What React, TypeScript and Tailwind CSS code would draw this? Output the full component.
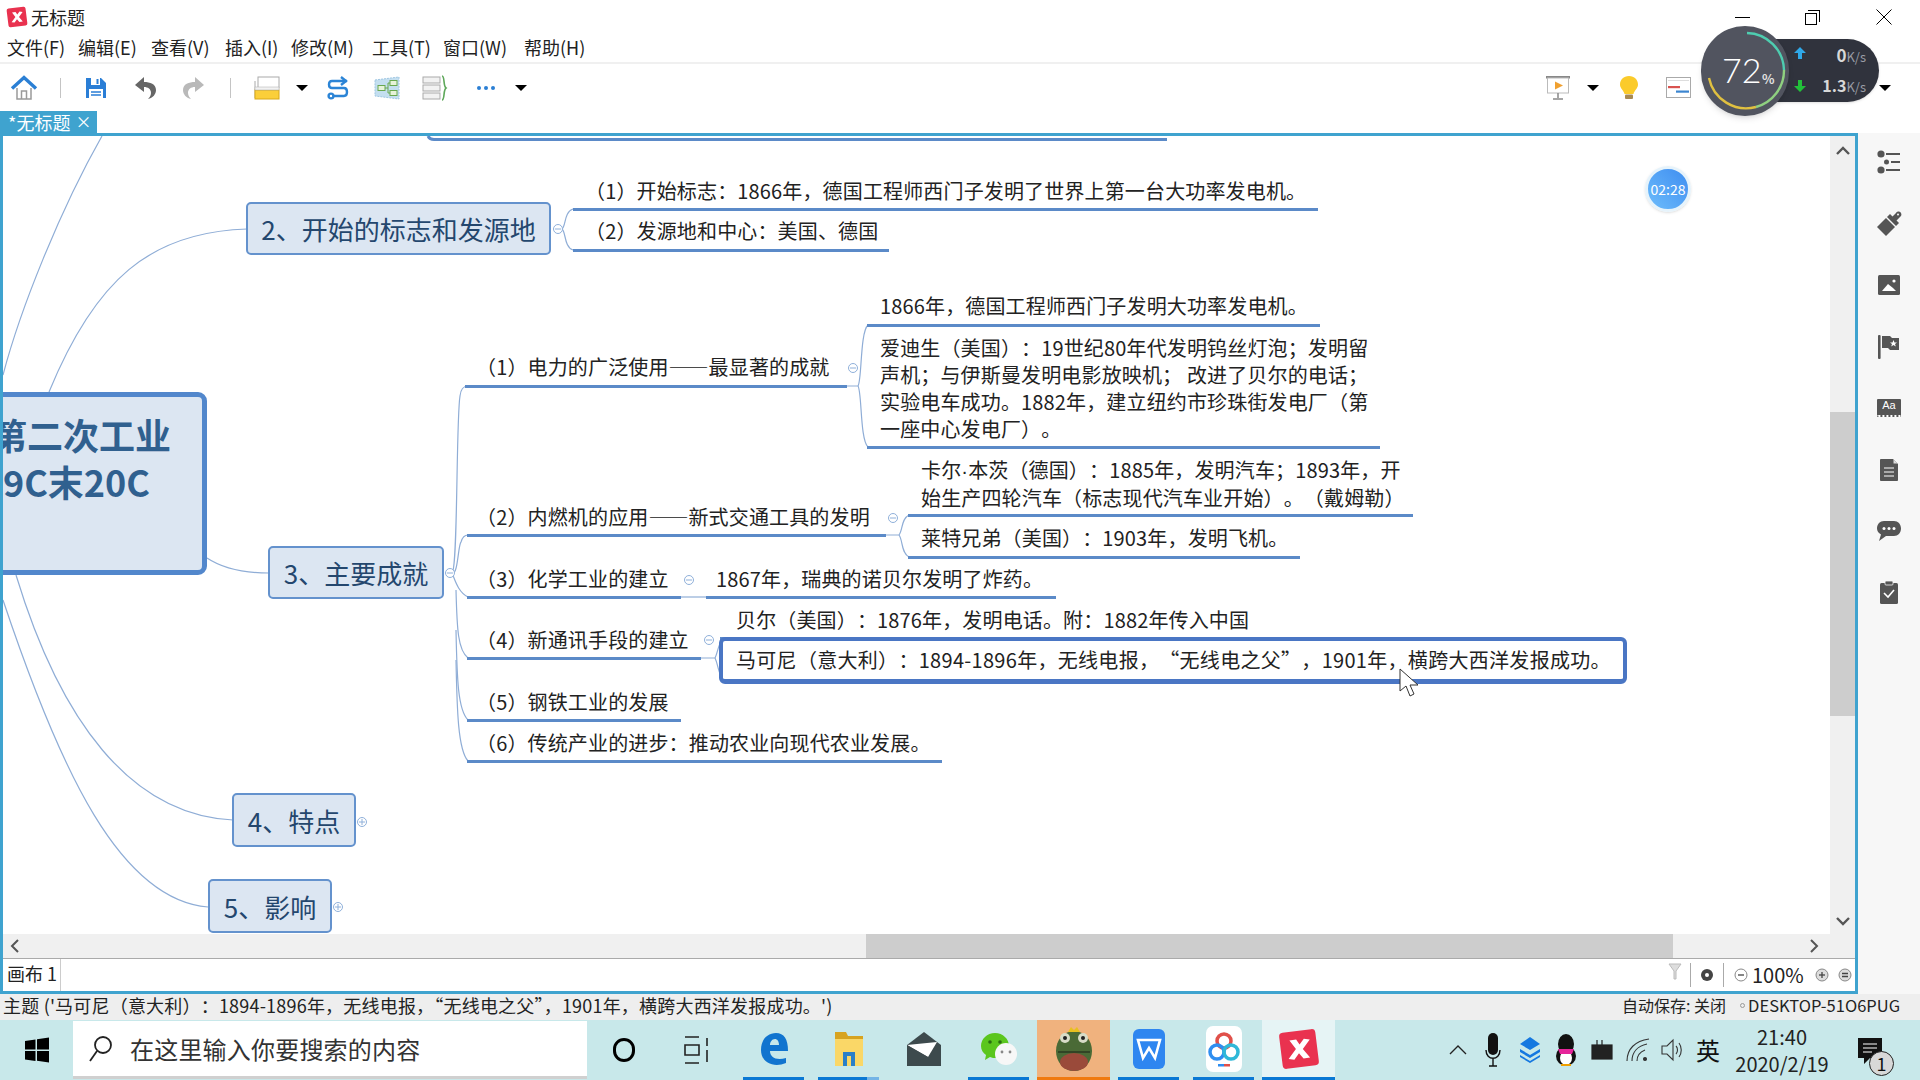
import type { ReactNode } from "react";

const menus = [
  { label: "文件(F)", cls: "w-[71px]" },
  { label: "编辑(E)", cls: "w-[73px]" },
  { label: "查看(V)", cls: "w-[74px]" },
  { label: "插入(I)", cls: "w-[66px]" },
  { label: "修改(M)", cls: "w-[81px]" },
  { label: "工具(T)", cls: "w-[71px]" },
  { label: "窗口(W)", cls: "w-[81px]" },
  { label: "帮助(H)", cls: "w-[80px]" },
];

function Caret({ className = "" }: { className?: string }) {
  return <div className={"w-0 h-0 border-x-[6px] border-x-transparent border-t-[6px] border-t-black " + className} />;
}

function Cell({ className, children }: { className: string; children?: ReactNode }) {
  return <div className={"flex items-center justify-center shrink-0 h-full " + className}>{children}</div>;
}

function XmindLogo({ size }: { size: number }) {
  return (
    <svg width={size} height={size} viewBox="0 0 24 24">
      <rect x="2.5" y="2.5" width="19" height="19" rx="2" fill="#e9324f" transform="rotate(-7 12 12)" />
      <path d="M7 7.5 L10.5 7 L12.3 9.6 L14.5 6.6 L17.6 7 L14 12 L17.8 16.4 L14.4 17 L12 14.2 L9.6 17.6 L6.6 17.2 L10.4 12 Z" fill="#fff" />
    </svg>
  );
}

function TitleBar() {
  return (
    <div className="h-[34px] flex items-center shrink-0 relative">
      <div className="ml-[3px] w-[27px] flex justify-center"><XmindLogo size={24} /></div>
      <span className="ml-[1px] text-[18px] text-[#222]">无标题</span>
      <div className="ml-auto flex items-center h-full">
        <div className="w-[15px] h-px bg-black mr-[55px]" />
        <div className="relative w-[15px] h-[15px] mr-[56px]">
          <div className="absolute left-0 bottom-0 w-[12px] h-[12px] border border-black bg-white" />
          <div className="absolute right-0 top-0 w-[12px] h-[12px] border-t border-r border-black" />
        </div>
        <svg width="16" height="16" viewBox="0 0 16 16" className="mr-[28px]"><path d="M0.5 0.5 L15.5 15.5 M15.5 0.5 L0.5 15.5" stroke="#000" strokeWidth="1" /></svg>
      </div>
    </div>
  );
}

function MenuBar() {
  return (
    <div className="h-[30px] flex items-center pl-[7px] pb-[2px] border-b-2 border-[#f0f0f0] shrink-0 text-[18px] text-[#222]">
      {menus.map((m) => (
        <div key={m.label} className={"whitespace-nowrap " + m.cls}>{m.label}</div>
      ))}
    </div>
  );
}

function Toolbar() {
  return (
    <div className="h-[47px] flex items-center shrink-0">
      <Cell className="w-[48px]">
        <svg width="28" height="28" viewBox="0 0 28 28">
          <path d="M7 14 V25 H21 V14" fill="#fff" stroke="#9a9a9a" strokeWidth="1.5" />
          <path d="M11.5 25 V17 H16.5 V25" fill="none" stroke="#9a9a9a" strokeWidth="1.5" />
          <path d="M2 14.5 L14 3.5 L26 14.5" fill="none" stroke="#2b7fd4" strokeWidth="3.4" />
        </svg>
      </Cell>
      <Cell className="w-[24px]"><div className="w-px h-[20px] bg-[#c4c4c4]" /></Cell>
      <Cell className="w-[48px]">
        <svg width="24" height="24" viewBox="0 0 24 24">
          <path d="M2 2 H17 L22 7 V22 H2 Z" fill="#2a7ed6" />
          <rect x="7" y="2" width="9" height="7" fill="#fff" />
          <rect x="12.5" y="3" width="2" height="5" fill="#2a7ed6" />
          <rect x="5" y="13" width="14" height="9" fill="#fff" />
          <path d="M7 16 H17 M7 19 H17" stroke="#2a7ed6" strokeWidth="1.3" />
        </svg>
      </Cell>
      <Cell className="w-[50px]">
        <svg width="24" height="26" viewBox="0 0 24 26"><path d="M11 2 L2 10 L11 17 V12 C15 12 18 14 18 18 C18 21 16 23 15 24 C20 23 23 19 23 15 C23 9 17 7 11 7 Z" fill="#666" /></svg>
      </Cell>
      <Cell className="w-[48px]">
        <svg width="24" height="26" viewBox="0 0 24 26"><path d="M13 2 L22 10 L13 17 V12 C9 12 6 14 6 18 C6 21 8 23 9 24 C4 23 1 19 1 15 C1 9 7 7 13 7 Z" fill="#b9b9b9" /></svg>
      </Cell>
      <Cell className="w-[24px]"><div className="w-px h-[20px] bg-[#c4c4c4]" /></Cell>
      <Cell className="w-[50px]">
        <svg width="26" height="24" viewBox="0 0 26 24">
          <rect x="4" y="1" width="21" height="11" fill="#fff" stroke="#aaa" />
          <path d="M1 5 V22 H4" fill="none" stroke="#aaa" />
          <rect x="1" y="14" width="24" height="9" fill="#fbcf3a" stroke="#d9a91a" />
          <rect x="1" y="11" width="24" height="3" fill="#f2f2f2" stroke="#aaa" strokeWidth="0.5" />
        </svg>
      </Cell>
      <Cell className="w-[20px]"><Caret /></Cell>
      <Cell className="w-[52px]">
        <svg width="24" height="24" viewBox="0 0 24 24" fill="none" stroke="#2b84d6" strokeWidth="2.4">
          <path d="M21 5 H6 C2 5 2 12 6 12 H18 C22 12 22 20 18 20 H8" />
          <path d="M15 1 L20 5 L15 9" />
          <circle cx="5" cy="20" r="2.4" />
        </svg>
      </Cell>
      <Cell className="w-[46px]">
        <svg width="26" height="24" viewBox="0 0 26 24">
          <path d="M1 4 L25 1 V23 L1 20 Z" fill="#c4dff0" stroke="#9ec6e2" strokeDasharray="2 1" />
          <rect x="4" y="9.5" width="7" height="5" fill="#e6f3d9" stroke="#68a84f" />
          <rect x="16" y="4.5" width="7" height="5" fill="#e6f3d9" stroke="#68a84f" />
          <rect x="16" y="14.5" width="7" height="5" fill="#e6f3d9" stroke="#68a84f" />
          <path d="M11 12 H14 V7 H16 M14 12 V17 H16" fill="none" stroke="#68a84f" />
        </svg>
      </Cell>
      <Cell className="w-[50px]">
        <svg width="26" height="26" viewBox="0 0 26 26">
          <rect x="1" y="2" width="17" height="6" fill="#f2f2f2" stroke="#aaa" />
          <rect x="1" y="10" width="17" height="6" fill="#f2f2f2" stroke="#aaa" />
          <rect x="1" y="18" width="17" height="6" fill="#f2f2f2" stroke="#aaa" />
          <path d="M20 1 C23 1 21 11 24 13 C21 15 23 25 20 25" fill="none" stroke="#5ea85a" strokeWidth="1.6" />
        </svg>
      </Cell>
      <Cell className="w-[52px]">
        <div className="flex gap-[3px]">
          <div className="w-[4px] h-[4px] rounded-full bg-[#2b7fd4]" />
          <div className="w-[4px] h-[4px] rounded-full bg-[#2b7fd4]" />
          <div className="w-[4px] h-[4px] rounded-full bg-[#2b7fd4]" />
        </div>
      </Cell>
      <Cell className="w-[18px]"><Caret /></Cell>

      <Cell className="w-[40px] ml-[1008px]">
        <svg width="26" height="26" viewBox="0 0 26 26">
          <rect x="1" y="1" width="24" height="2.5" fill="#888" />
          <rect x="2.5" y="3" width="21" height="15" fill="#fff" stroke="#bbb" />
          <path d="M10 6.5 L18 10.5 L10 14.5 Z" fill="#f0a030" />
          <path d="M13 18 V23 M8 24 H18" stroke="#888" strokeWidth="1.5" />
        </svg>
      </Cell>
      <Cell className="w-[30px]"><Caret /></Cell>
      <Cell className="w-[42px]">
        <svg width="20" height="26" viewBox="0 0 20 26">
          <path d="M10 1 C4.5 1 1 5 1 9.5 C1 13.5 4.5 15 5.5 19 H14.5 C15.5 15 19 13.5 19 9.5 C19 5 15.5 1 10 1 Z" fill="#fbcb2b" />
          <rect x="6" y="19.5" width="8" height="4.5" rx="1" fill="#a98a52" />
        </svg>
      </Cell>
      <Cell className="w-[56px]">
        <svg width="25" height="21" viewBox="0 0 25 21">
          <rect x="0.5" y="0.5" width="24" height="20" fill="#fff" stroke="#aaa" />
          <path d="M2 3.5 H23" stroke="#ddd" />
          <rect x="2" y="9" width="12" height="2.2" fill="#d9534f" />
          <rect x="10" y="13.5" width="13" height="2.2" fill="#3b85d0" />
        </svg>
      </Cell>
      <Cell className="w-[20px] ml-auto mr-[25px]"><Caret /></Cell>
    </div>
  );
}

function Sub({ className, children }: { className: string; children: ReactNode }) {
  return (
    <div className={"absolute border-b-[3px] border-[#5b8ac8] text-[20px] tracking-[0.15px] leading-[27px] text-[#222] whitespace-nowrap " + className}>
      {children}
    </div>
  );
}

function Dash() {
  return <span className="[font-feature-settings:'fwid'] tracking-normal">——</span>;
}

function Branch({ className, children }: { className: string; children: ReactNode }) {
  return (
    <div className={"absolute flex items-center justify-center bg-[#dce6f2] border-2 border-[#6492cd] rounded-[5px] text-[26px] text-[#24476e] whitespace-nowrap " + className}>
      {children}
    </div>
  );
}

function Fold({ x, y, plus = false }: { x: number; y: number; plus?: boolean }) {
  return (
    <g fill="#fff" stroke="#8fb0da" strokeWidth="1">
      <circle cx={x} cy={y} r="4.5" />
      <path d={`M${x - 3} ${y} H${x + 3}`} />
      {plus && <path d={`M${x} ${y - 3} V${y + 3}`} />}
    </g>
  );
}

function Connectors() {
  return (
    <svg className="absolute inset-0 w-[1827px] h-[798px]" viewBox="3 136 1827 798">
      <g fill="none" stroke="#8fadd6" strokeWidth="1.2">
        <path d="M102 136 C60 210 20 310 3 375" />
        <path d="M247 229 C150 232 95 280 49 392" />
        <path d="M207 558 C222 568 240 573 269 573" />
        <path d="M16 575 C60 720 130 815 233 820" />
        <path d="M3 600 C60 770 120 900 208 907" />
        <path d="M445 573 H452 C458 570 456 420 460 396 Q461 386 468 386" />
        <path d="M452 573 C458 576 458 545 461 542 Q463 535 468 535" />
        <path d="M452 573 C455 580 458 592 468 597" />
        <path d="M456 590 C457 630 458 650 468 658" />
        <path d="M456 630 C457 680 458 710 468 720" />
        <path d="M456 660 C457 710 458 750 468 761" />
        <path d="M553 229 H562 C566 226 564 212 573 209" />
        <path d="M562 229 C566 232 564 247 573 250" />
        <path d="M847 386 H858 C862 380 860 332 868 325" />
        <path d="M858 386 C862 392 860 440 868 447" />
        <path d="M886 535 H899 C903 530 901 519 909 515" />
        <path d="M899 535 C903 540 901 553 909 557" />
        <path d="M681 597 H706" />
        <path d="M701 658 H715 C718 652 718 645 722 640" />
        <path d="M715 658 C718 664 718 672 722 678" />
      </g>
      <path d="M428 136 C429 138 431 139.5 434 139.5 H1167" fill="none" stroke="#5b8ac8" strokeWidth="3" />
      <Fold x={558} y={229} />
      <Fold x={450} y={573} />
      <Fold x={853} y={368} />
      <Fold x={893} y={518} />
      <Fold x={689} y={580} />
      <Fold x={709} y={640} />
      <Fold x={362} y={822} plus />
      <Fold x={338} y={907} plus />
    </svg>
  );
}

function Canvas() {
  return (
    <div className="relative w-[1827px] h-[798px] overflow-hidden bg-white shrink-0">
      <Connectors />
      <div className="absolute left-[-20px] top-[256px] w-[224px] h-[183px] bg-[#dce6f2] border-[5px] border-[#5287cc] rounded-[9px] pl-[3px] pt-[14px] text-[36px] leading-[47px] font-bold text-[#30608f] whitespace-nowrap">
        <div>第二次工业</div>
        <div className="pl-[12px]">9C末20C</div>
      </div>

      <Branch className="left-[243px] top-[66px] w-[305px] h-[53px]">2、开始的标志和发源地</Branch>
      <Branch className="left-[265px] top-[410px] w-[176px] h-[53px]">3、主要成就</Branch>
      <Branch className="left-[229px] top-[657px] w-[124px] h-[54px]">4、特点</Branch>
      <Branch className="left-[205px] top-[743px] w-[124px] h-[54px]">5、影响</Branch>

      <Sub className="left-[570px] top-[41px] w-[745px] h-[34px] pl-[12px]">（1）开始标志：1866年，德国工程师西门子发明了世界上第一台大功率发电机。</Sub>
      <Sub className="left-[570px] top-[81px] w-[316px] h-[35px] pl-[12px]">（2）发源地和中心：美国、德国</Sub>

      <Sub className="left-[462px] top-[217px] w-[382px] h-[35px] pl-[11px]">（1）电力的广泛使用<Dash />最显著的成就</Sub>
      <Sub className="left-[864px] top-[156px] w-[453px] h-[35px] pl-[13px]">1866年，德国工程师西门子发明大功率发电机。</Sub>
      <Sub className="left-[864px] top-[198px] w-[513px] h-[115px] pl-[13px]">
        <div>爱迪生（美国）：19世纪80年代发明钨丝灯泡；发明留</div>
        <div>声机；与伊斯曼发明电影放映机； 改进了贝尔的电话；</div>
        <div>实验电车成功。1882年，建立纽约市珍珠街发电厂（第</div>
        <div>一座中心发电厂）。</div>
      </Sub>

      <Sub className="left-[464px] top-[367px] w-[419px] h-[34px] pl-[9px]">（2）内燃机的应用<Dash />新式交通工具的发明</Sub>
      <Sub className="left-[905px] top-[320px] w-[505px] h-[61px] pl-[13px]">
        <div>卡尔<span className="font-['Liberation_Sans',sans-serif]">·</span>本茨（德国）：1885年，发明汽车；1893年，开</div>
        <div className="-mt-[1px]">始生产四轮汽车（标志现代汽车业开始）。（戴姆勒）</div>
      </Sub>
      <Sub className="left-[905px] top-[388px] w-[392px] h-[35px] pl-[13px]">莱特兄弟（美国）：1903年，发明飞机。</Sub>

      <Sub className="left-[464px] top-[429px] w-[214px] h-[34px] pl-[9px]">（3）化学工业的建立</Sub>
      <Sub className="left-[703px] top-[429px] w-[350px] h-[34px] pl-[10px]">1867年，瑞典的诺贝尔发明了炸药。</Sub>

      <Sub className="left-[464px] top-[490px] w-[234px] h-[34px] pl-[9px]">（4）新通讯手段的建立</Sub>
      <Sub className="left-[717px] top-[470px] w-[543px] h-[34px] pl-[16px] border-[#2f5cb0]">贝尔（美国）：1876年，发明电话。附：1882年传入中国</Sub>
      <div className="absolute left-[716px] top-[501px] w-[908px] h-[47px] flex items-center pl-[13px] border-[4px] border-b-[5px] border-[#4a76c4] rounded-[6px] text-[20px] tracking-[0.3px] text-[#222] whitespace-nowrap">
        马可尼（意大利）：1894-1896年，无线电报，“无线电之父”，1901年，横跨大西洋发报成功。
      </div>

      <Sub className="left-[464px] top-[552px] w-[214px] h-[34px] pl-[9px]">（5）钢铁工业的发展</Sub>
      <Sub className="left-[464px] top-[593px] w-[475px] h-[34px] pl-[9px]">（6）传统产业的进步：推动农业向现代农业发展。</Sub>

      <div className="absolute left-[1642px] top-[30px] w-[46px] h-[46px] rounded-full border-[3px] border-[#e6f3fb] bg-gradient-to-tr from-[#6dbcfb] to-[#3f8df0] flex items-center justify-center text-[14px] text-white shadow-sm">
        02:28
      </div>

      <svg className="absolute left-[1396px] top-[532px]" width="22" height="30" viewBox="0 0 22 30">
        <path d="M1 1 L1 23 L7 18 L11 28 L15 26 L11 17 L19 17 Z" fill="#fff" stroke="#333" strokeWidth="1" />
      </svg>
    </div>
  );
}

function VScroll() {
  return (
    <div className="w-[25px] flex flex-col bg-[#f0f0f0] shrink-0 relative">
      <div className="h-[276px] flex justify-center pt-[10px]">
        <svg width="14" height="10" viewBox="0 0 14 10"><path d="M1 8 L7 2 L13 8" fill="none" stroke="#555" strokeWidth="2.4" /></svg>
      </div>
      <div className="h-[304px] bg-[#cdcdcd]" />
      <div className="flex-1 flex items-end justify-center pb-[8px]">
        <svg width="14" height="10" viewBox="0 0 14 10"><path d="M1 2 L7 8 L13 2" fill="none" stroke="#555" strokeWidth="2.4" /></svg>
      </div>
    </div>
  );
}

function HScroll() {
  return (
    <div className="h-[25px] flex bg-[#f0f0f0] border-b border-[#aaaaaa] shrink-0">
      <div className="w-[863px] flex items-center pl-[7px]">
        <svg width="10" height="14" viewBox="0 0 10 14"><path d="M8 1 L2 7 L8 13" fill="none" stroke="#555" strokeWidth="2" /></svg>
      </div>
      <div className="w-[807px] bg-[#cdcdcd]" />
      <div className="flex-1 flex items-center pl-[136px]">
        <svg width="10" height="14" viewBox="0 0 10 14"><path d="M2 1 L8 7 L2 13" fill="none" stroke="#555" strokeWidth="2" /></svg>
      </div>
    </div>
  );
}

function ZoomBtn({ plus = false, eq = false }: { plus?: boolean; eq?: boolean }) {
  return (
    <svg width="14" height="14" viewBox="0 0 14 14">
      <circle cx="7" cy="7" r="6" fill={plus || eq ? "#ddd" : "#fff"} stroke="#888" />
      <path d={eq ? "M4 5.5 H10 M4 8.5 H10" : "M4 7 H10"} stroke="#444" strokeWidth="1.3" />
      {plus && <path d="M7 4 V10" stroke="#444" strokeWidth="1.3" />}
    </svg>
  );
}

function SheetBar() {
  return (
    <div className="flex-1 flex items-stretch bg-white">
      <div className="w-[58px] border-r border-[#cccccc] text-[18px] text-[#222] pl-[4px] pb-[3px] flex items-center">画布 1</div>
      <div className="ml-auto flex items-center">
        <svg width="14" height="18" viewBox="0 0 14 18" className="mr-[8px] mb-[6px]"><path d="M1 1 H13 L8 8 V16 L6 16 V8 Z" fill="#ddd" stroke="#bbb" /></svg>
        <div className="w-px h-[24px] bg-[#aaa]" />
        <svg width="32" height="14" viewBox="0 0 32 14"><circle cx="16" cy="7" r="6" fill="#444" /><circle cx="16" cy="7" r="2" fill="#fff" /></svg>
        <div className="w-px h-[24px] bg-[#aaa]" />
        <div className="ml-[10px]"><ZoomBtn /></div>
        <span className="ml-[4px] text-[20px] text-[#222] w-[55px]">100%</span>
        <div className="ml-[8px]"><ZoomBtn plus /></div>
        <div className="ml-[9px] mr-[3px]"><ZoomBtn eq /></div>
      </div>
    </div>
  );
}

const sideIcons = [
  <svg key="a" width="24" height="24" viewBox="0 0 24 24" fill="#555"><circle cx="4" cy="4" r="3.6" /><circle cx="9.5" cy="12" r="2.5" /><circle cx="4" cy="20" r="3.6" /><path d="M9 3 H23 V5 H9 Z M14 11 H23 V13 H14 Z M9 19 H23 V21 H9 Z" /></svg>,
  <svg key="b" width="26" height="26" viewBox="0 0 26 26" fill="#555"><path d="M1 16 L10 7 L19 16 L10 25 Z" /><path d="M11 6 L14 3 L23 12 L20 15 Z" /><path d="M15 7 L20 2 C21 0 24 0 25 2 C26 4 25 5 24 6 L19 11 Z" /><circle cx="22" cy="3.5" r="1" fill="#f6f6f6" /></svg>,
  <svg key="c" width="22" height="20" viewBox="0 0 22 20"><rect width="22" height="20" rx="1.5" fill="#555" /><path d="M4 16 L10 9 L15 13 L18 16 Z" fill="#fff" /><circle cx="16" cy="6" r="1.6" fill="#fff" /></svg>,
  <svg key="d" width="22" height="24" viewBox="0 0 22 24" fill="#555"><rect x="0" y="0" width="2.6" height="24" rx="1" /><path d="M4 1 H12 L14 3 H21 V15 H12 L10 13 H4 Z" /><path d="M15.5 5 L16.5 7.5 L19 7.5 L17 9 L17.8 11.5 L15.5 10 L13.2 11.5 L14 9 L12 7.5 L14.5 7.5 Z" fill="#fff" /></svg>,
  <div key="e" className="w-[24px] h-[18px] bg-[#555] rounded-[1px] text-white text-[11px] leading-[13px] text-center font-['Liberation_Sans',sans-serif] border-b-2 border-dotted border-white">Aa</div>,
  <svg key="f" width="18" height="22" viewBox="0 0 18 22"><path d="M1 0 H13 L18 5 V21 C18 21.5 17.5 22 17 22 H1 C0.5 22 0 21.5 0 21 V1 C0 .5 .5 0 1 0 Z" fill="#555" /><path d="M13.5 0.5 V4.5 H17.5" fill="#ddd" /><path d="M4 9 H14 M4 13 H14 M4 17 H14" stroke="#fff" strokeWidth="1" /></svg>,
  <svg key="g" width="24" height="20" viewBox="0 0 24 20"><path d="M7 0 H17 C21 0 24 3 24 7.5 C24 12 21 15 17 15 H9 L2 20 L4 13.5 C1.5 12 0 10 0 7.5 C0 3 3 0 7 0 Z" fill="#555" /><circle cx="7" cy="7.5" r="1.5" fill="#fff" /><circle cx="12" cy="7.5" r="1.5" fill="#fff" /><circle cx="17" cy="7.5" r="1.5" fill="#fff" /></svg>,
  <svg key="h" width="18" height="23" viewBox="0 0 18 23"><rect y="2" width="18" height="21" rx="1.5" fill="#555" /><rect x="5" y="0" width="8" height="4" rx="1" fill="#555" stroke="#f6f6f6" strokeWidth="0.8" /><path d="M4 12 L8 16 L14 9" fill="none" stroke="#fff" strokeWidth="1.6" /></svg>,
];

function SidePanel() {
  return (
    <div className="flex-1 bg-[#f7f7f7] flex flex-col items-center pt-[17px] gap-[37.5px]">
      {sideIcons.map((icon, i) => (
        <div key={i} className="h-[24px] flex items-center justify-center">{icon}</div>
      ))}
    </div>
  );
}

function StatusBar() {
  return (
    <div className="h-[26px] bg-[#eeeeee] flex items-center shrink-0 pl-[3px] pb-[4px] text-[18px] text-[#222] whitespace-nowrap">
      <span className="tracking-[0.2px]">
        主题 ('马可尼（意大利）：1894-1896年，无线电报<span className="[text-spacing-trim:normal]">，“无线电之父”，</span>1901年，横跨大西洋发报成功。')
      </span>
      <span className="ml-auto text-[16px]">自动保存: 关闭</span>
      <div className="ml-[14px] w-[5px] h-[5px] rounded-full border border-[#999]" />
      <span className="ml-[3px] mr-[20px] text-[16.5px]">DESKTOP-51O6PUG</span>
    </div>
  );
}

function TaskSlot({ className, bar, children }: { className: string; bar: string; children: ReactNode }) {
  return (
    <div className={"h-full flex flex-col items-center shrink-0 " + className}>
      <div className="flex-1 flex items-center justify-center">{children}</div>
      <div className={"h-[3px] w-full " + bar} />
    </div>
  );
}

function Taskbar() {
  return (
    <div className="h-[60px] bg-[#c8e8ea] flex items-stretch shrink-0 relative">
      <div className="w-[73px] flex items-center justify-center">
        <svg width="26" height="26" viewBox="0 0 26 26" fill="#000"><path d="M1 4 L11.5 2.5 V12.5 H1 Z M13 2.3 L25 .5 V12.5 H13 Z M1 14 H11.5 V24 L1 22.5 Z M13 14 H25 V25.5 L13 23.8 Z" /></svg>
      </div>
      <div className="w-[514px] my-px bg-white border-b-[3px] border-[#d0d0d0] flex items-center pl-[16px] text-[24px] text-[#333]">
        <svg width="24" height="28" viewBox="0 0 24 28" fill="none" stroke="#222" strokeWidth="1.8"><circle cx="14" cy="10" r="8" /><path d="M8 16 L1 26" /></svg>
        <span className="ml-[17px] tracking-[0.2px]">在这里输入你要搜索的内容</span>
      </div>
      <div className="w-[73px] flex items-center justify-center">
        <div className="w-[22px] h-[24px] rounded-full border-[3.5px] border-black" />
      </div>
      <div className="w-[73px] flex items-center justify-center">
        <svg width="26" height="28" viewBox="0 0 26 28" fill="none" stroke="#222" strokeWidth="1.6"><path d="M1 1 H15 M1 27 H15 M1 9 H15 V19 H1 Z M23 2 V10 M23 14 V26" /></svg>
      </div>
      <div className="w-[10px]" />
      <TaskSlot className="w-[61px]" bar="bg-[#0a78d4]">
        <svg width="32" height="36" viewBox="0 0 32 36"><path d="M3 19 C3 8 10 2 18 2 C26 2 30 8 30 20 H12 C12 26 18 30 28 27 V32 C16 37 3 32 3 19 Z M12 14 H21 C21 10 19 8 17 8 C14 8 12 11 12 14 Z" fill="#1174cf" /></svg>
      </TaskSlot>
      <div className="w-[14px]" />
      <TaskSlot className="w-[61px]" bar="bg-gradient-to-r from-[#0a78d4] from-80% to-[#74b4e6] to-80%">
        <svg width="32" height="36" viewBox="0 0 32 36"><path d="M2 1 H13 L15 5 H30 V35 H2 Z" fill="#d7a320" /><rect x="2" y="8" width="28" height="27" fill="#fad767" /><path d="M10 35 V21 H22 V35 H18 V25 H14 V35 Z" fill="#2a7fc8" /></svg>
      </TaskSlot>
      <div className="w-[14px]" />
      <TaskSlot className="w-[61px]" bar="bg-transparent">
        <svg width="36" height="36" viewBox="0 0 36 36"><path d="M1 14 L18 1 L35 14 V35 H1 Z" fill="#3d4a4d" /><path d="M1 14 L31 11 L22 26 Z" fill="#fff" /><path d="M1 14 L22 26 L1 35 Z" fill="#3d4a4d" /></svg>
      </TaskSlot>
      <div className="w-[14px]" />
      <TaskSlot className="w-[61px]" bar="bg-[#0a78d4]">
        <svg width="38" height="34" viewBox="0 0 38 34">
          <path d="M15 1 C7 1 1 7 1 14 C1 18 3 21 6 23 L5 28 L10 25 C12 26 14 26 16 26 C24 26 29 20 29 14 C29 7 23 1 15 1 Z" fill="#5bc61e" />
          <circle cx="10" cy="10" r="1.8" fill="#2a6e10" /><circle cx="20" cy="10" r="1.8" fill="#2a6e10" />
          <circle cx="26" cy="22" r="11" fill="#f7f7f7" />
          <circle cx="22" cy="20" r="1.4" fill="#888" /><circle cx="30" cy="20" r="1.4" fill="#888" />
        </svg>
      </TaskSlot>
      <div className="w-[8px]" />
      <TaskSlot className="w-[73px] bg-[#f0b27e]" bar="bg-[#f07a10]">
        <svg width="38" height="46" viewBox="0 0 38 46">
          <ellipse cx="19" cy="25" rx="18" ry="20" fill="#4a6a36" />
          <ellipse cx="19" cy="36" rx="14" ry="9" fill="#9a4a3a" />
          <path d="M3 26 H35" stroke="#2a3a20" strokeWidth="1.5" />
          <circle cx="10" cy="12" r="5" fill="#d8dcc8" /><circle cx="28" cy="12" r="5" fill="#d8dcc8" />
          <circle cx="10" cy="12" r="2" fill="#222" /><circle cx="28" cy="12" r="2" fill="#222" />
          <path d="M13 6 L16 1 L19 4 L22 1 L25 6 Z" fill="#e8c020" />
        </svg>
      </TaskSlot>
      <div className="w-[8px]" />
      <TaskSlot className="w-[61px]" bar="bg-[#0a78d4]">
        <svg width="32" height="40" viewBox="0 0 32 40">
          <rect width="32" height="40" rx="6" fill="#2e86f0" />
          <path d="M5 11 H27 L22 29 L16 19 L10 29 Z" fill="none" stroke="#fff" strokeWidth="2.6" />
        </svg>
      </TaskSlot>
      <div className="w-[14px]" />
      <TaskSlot className="w-[61px]" bar="bg-[#0a78d4]">
        <svg width="36" height="46" viewBox="0 0 36 46">
          <rect width="36" height="46" rx="7" fill="#fff" />
          <circle cx="18" cy="15" r="7" fill="none" stroke="#e0504a" strokeWidth="3.5" />
          <circle cx="11" cy="26" r="7" fill="none" stroke="#2f8ef0" strokeWidth="3.5" />
          <circle cx="25" cy="26" r="7" fill="none" stroke="#2fb8d8" strokeWidth="3.5" />
          <rect x="12" y="38" width="6" height="2.5" fill="#2f8ef0" /><rect x="18" y="38" width="6" height="2.5" fill="#e0504a" />
        </svg>
      </TaskSlot>
      <div className="w-[8px]" />
      <TaskSlot className="w-[73px] bg-[#e6f4f5]" bar="bg-[#0a78d4]">
        <XmindLogo size={46} />
      </TaskSlot>
      <div className="w-[111px]" />
      <div className="w-[24px] flex items-center justify-center">
        <svg width="18" height="10" viewBox="0 0 18 10"><path d="M1 9 L9 1 L17 9" fill="none" stroke="#222" strokeWidth="1.3" /></svg>
      </div>
      <div className="w-[46px] flex items-center justify-center">
        <svg width="16" height="34" viewBox="0 0 16 34"><rect x="3" y="0" width="10" height="22" rx="5" fill="#111" /><path d="M1 17 C1 28 15 28 15 17 M8 25 V33 M4 33 H12" fill="none" stroke="#111" strokeWidth="1.4" /></svg>
      </div>
      <div className="w-[28px] flex items-center justify-center">
        <svg width="22" height="26" viewBox="0 0 22 26" fill="#1578e0"><path d="M11 0 L21 7 L11 13 L1 7 Z" /><path d="M1 12 L11 18 L21 12 V15 L11 21 L1 15 Z" /><path d="M1 18 L11 24 L21 18 V20 L11 26 L1 20 Z" /></svg>
      </div>
      <div className="w-[44px] flex items-center justify-center">
        <svg width="22" height="32" viewBox="0 0 22 32"><ellipse cx="11" cy="10" rx="8" ry="10" fill="#111" /><ellipse cx="11" cy="22" rx="10" ry="10" fill="#111" /><ellipse cx="11" cy="24" rx="6" ry="7" fill="#fff" /><path d="M3 15 H19 L17 20 H5 Z" fill="#e6259a" /><path d="M6 30 H16 V32 H6 Z" fill="#f0a000" /></svg>
      </div>
      <div className="w-[28px] flex items-center justify-center">
        <svg width="22" height="24" viewBox="0 0 22 24" fill="none" stroke="#222" strokeWidth="1.2"><rect x="1" y="7" width="20" height="14" fill="#222" /><path d="M6 7 V2 M11 7 V2" /></svg>
      </div>
      <div className="w-[44px] flex items-center justify-center">
        <svg width="24" height="24" viewBox="0 0 24 24" fill="none" stroke="#333" strokeWidth="1.1"><path d="M1 23 C1 11 9 3 23 1 M6 23 C6 14 12 8 21 6 M11 23 C11 18 14 14 19 12" /><circle cx="19" cy="21" r="1.5" fill="#333" /></svg>
      </div>
      <div className="w-[24px] flex items-center justify-center">
        <svg width="24" height="24" viewBox="0 0 24 24" fill="none" stroke="#333" strokeWidth="1.1"><path d="M2 8 H7 L13 2 V22 L7 16 H2 Z M16 8 C18 10 18 14 16 16 M19 5 C22 9 22 15 19 19" /></svg>
      </div>
      <div className="w-[48px] flex items-center justify-center text-[24px] text-[#111]">英</div>
      <div className="w-[100px] flex flex-col items-center justify-center text-[20px] leading-[27px] text-[#222]">
        <div>21:40</div>
        <div>2020/2/19</div>
      </div>
      <div className="flex-1 relative">
        <svg className="absolute left-[26px] top-[18px]" width="24" height="26" viewBox="0 0 24 26"><path d="M0 0 H24 V20 H12 L6 26 V20 H0 Z" fill="#111" /><path d="M5 6 H19 M5 10 H19 M5 14 H14" stroke="#fff" strokeWidth="1" /></svg>
        <div className="absolute left-[37px] top-[31px] w-[25px] h-[25px] rounded-full bg-[#d8d8d8] border border-[#222] flex items-center justify-center text-[18px] text-[#111]">1</div>
      </div>
    </div>
  );
}

function NetWidget() {
  return (
    <div className="absolute left-[1701px] top-[26px] w-[178px] h-[90px]">
      <div className="absolute left-[40px] top-[13px] w-[138px] h-[63px] rounded-full bg-[#30333d] text-[#d8d8d8] shadow">
        <div className="absolute left-[53px] top-[8px] text-[13px]">
          <svg width="12" height="12" viewBox="0 0 12 12"><path d="M6 0 L12 6 H8 V12 H4 V6 H0 Z" fill="#2fa8e8" /></svg>
        </div>
        <div className="absolute right-[13px] top-[3px] flex items-baseline">
          <span className="text-[17px] font-bold">0</span><span className="text-[13px] text-[#9a9da6]">K/s</span>
        </div>
        <div className="absolute left-[53px] top-[41px]">
          <svg width="12" height="12" viewBox="0 0 12 12"><path d="M6 12 L12 6 H8 V0 H4 V6 H0 Z" fill="#22c03a" /></svg>
        </div>
        <div className="absolute right-[13px] top-[34px] flex items-baseline">
          <span className="text-[16px] font-bold">1.3</span><span className="text-[13px] text-[#9a9da6]">K/s</span>
        </div>
      </div>
      <div className="absolute left-0 top-0 w-[88px] h-[90px] rounded-full bg-[#51545f] shadow-md text-white">
        <svg className="absolute inset-0" width="88" height="90" viewBox="0 0 88 90" fill="none" strokeWidth="2.4">
          <path d="M46 7 A38 38 0 0 1 83 44" stroke="#4ecdb0" />
          <path d="M83 44 A38 38 0 0 1 55 81" stroke="#8fd080" />
          <path d="M55 81 A38 38 0 0 1 8 52" stroke="#e0c040" />
        </svg>
        <span className="absolute left-[21px] top-[27px] text-[34px] font-['Lato',sans-serif] font-light leading-none">72</span>
        <span className="absolute left-[61px] top-[46px] text-[13px] leading-none font-bold text-[#e0e0e0]">%</span>
      </div>
    </div>
  );
}

export default function App() {
  return (
    <div className="w-[1920px] h-[1080px] flex flex-col bg-white overflow-hidden relative [text-spacing-trim:space-all] font-['Noto_Sans_CJK_SC','Noto_Sans',sans-serif]">
      <TitleBar />
      <MenuBar />
      <Toolbar />
      <div className="h-[22px] shrink-0 flex">
        <div className="w-[97px] bg-[#3fa3cf] text-white text-[18px] leading-[22px] pl-[8px] whitespace-nowrap flex items-center">
          <span>*无标题</span><span className="ml-[5px] mb-[3px] text-[16px]">×</span>
        </div>
      </div>
      <div className="h-[861px] flex shrink-0">
        <div className="w-[1858px] flex flex-col border-[3px] border-[#3fa3cf] shrink-0">
          <div className="flex h-[798px] shrink-0">
            <Canvas />
            <VScroll />
          </div>
          <HScroll />
          <SheetBar />
        </div>
        <SidePanel />
      </div>
      <StatusBar />
      <Taskbar />
      <NetWidget />
    </div>
  );
}
